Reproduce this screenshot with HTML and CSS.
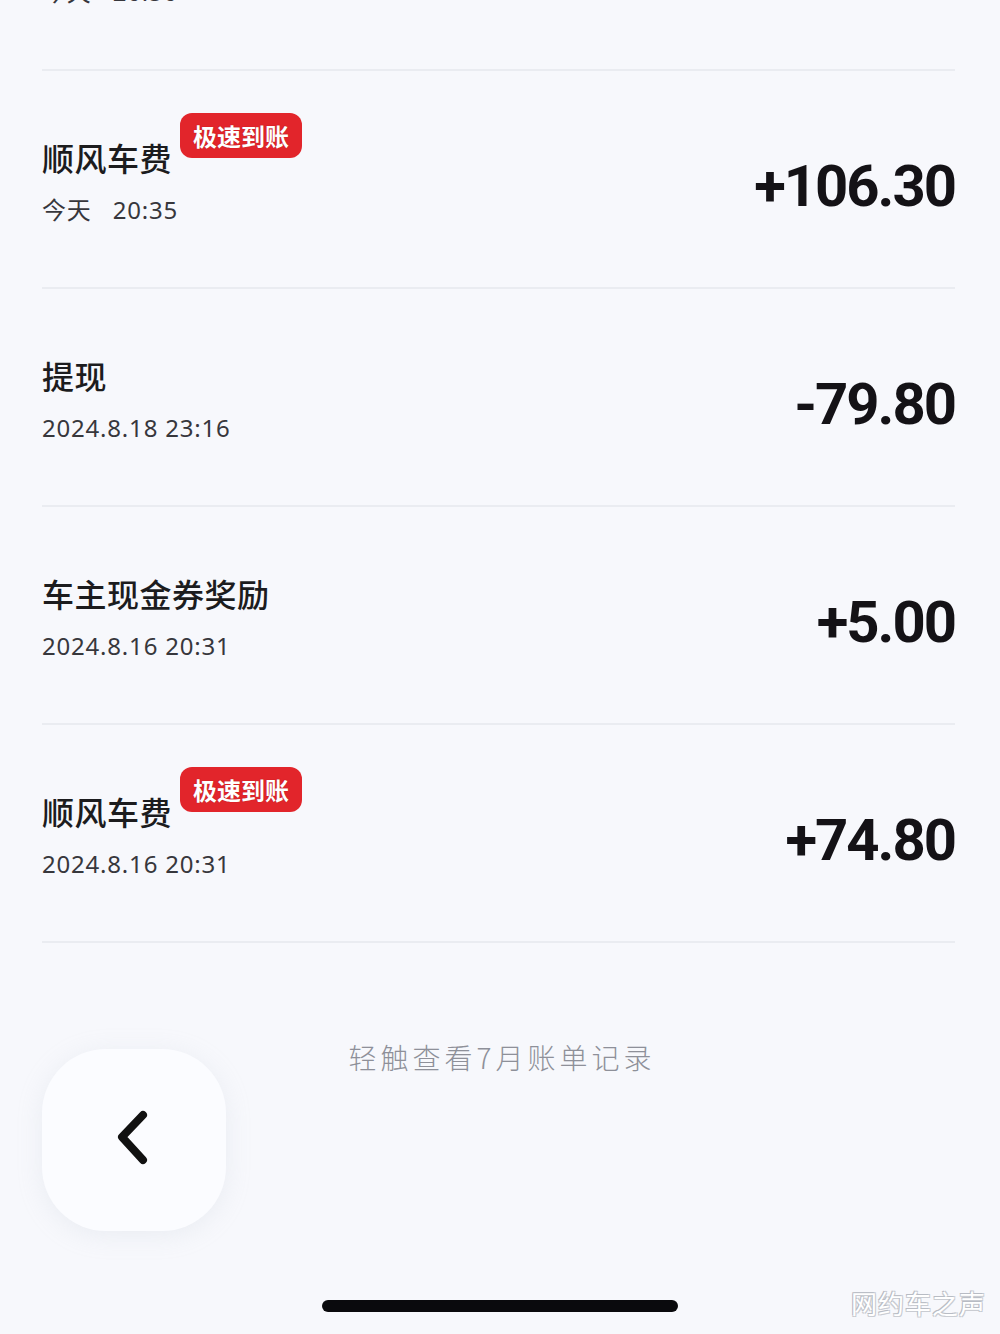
FILE: index.html
```html
<!DOCTYPE html>
<html lang="zh-CN">
<head>
<meta charset="utf-8">
<link rel="stylesheet" href="styles.css">
</head>
<body>
<div class="screen">
  <div class="list">
    <div class="row">
      <div class="info">
        <div class="title-line"><span class="title">顺风车费</span></div>
        <div class="date">今天&nbsp;&nbsp;&nbsp;20:50</div>
      </div>
      <div class="amount">+98.20</div>
    </div>
    <div class="row">
      <div class="info">
        <div class="title-line"><span class="title">顺风车费</span><span class="badge">极速到账</span></div>
        <div class="date">今天&nbsp;&nbsp;&nbsp;20:35</div>
      </div>
      <div class="amount">+106.30</div>
    </div>
    <div class="row">
      <div class="info">
        <div class="title-line"><span class="title">提现</span></div>
        <div class="date">2024.8.18 23:16</div>
      </div>
      <div class="amount">-79.80</div>
    </div>
    <div class="row">
      <div class="info">
        <div class="title-line"><span class="title">车主现金券奖励</span></div>
        <div class="date">2024.8.16 20:31</div>
      </div>
      <div class="amount">+5.00</div>
    </div>
    <div class="row">
      <div class="info">
        <div class="title-line"><span class="title">顺风车费</span><span class="badge">极速到账</span></div>
        <div class="date">2024.8.16 20:31</div>
      </div>
      <div class="amount">+74.80</div>
    </div>
  </div>
  <div class="more">轻触查看7月账单记录</div>
  <div class="back-wrap">
    <div class="back">
      <svg width="40" height="60" viewBox="0 0 40 60">
        <path d="M31 5 L10 27 L31 50" fill="none" stroke="#111" stroke-width="8" stroke-linecap="round" stroke-linejoin="round"/>
      </svg>
    </div>
  </div>
  <div class="home-bar"></div>
  <div class="watermark">网约车之声</div>
</div>
</body>
</html>
```
FILE: styles.css
```css
* { box-sizing: border-box; }
html, body {
  margin: 0;
  padding: 0;
  background: #f7f8fc;
}
body {
  width: 1000px;
  height: 1334px;
  overflow: hidden;
  font-family: "Noto Sans CJK SC", "Noto Sans", sans-serif;
}
.screen {
  position: relative;
  width: 1000px;
  height: 1334px;
  display: flex;
  flex-direction: column;
}
.list {
  margin-top: -147px;
  padding: 0 45px 0 42px;
}
.row {
  height: 218px;
  border-bottom: 2px solid #eaecf1;
  display: flex;
  align-items: center;
  justify-content: space-between;
}
.info {
  display: flex;
  flex-direction: column;
  padding-top: 2px;
}
.title-line {
  display: flex;
  align-items: center;
  height: 44px;
}
.title {
  font-size: 32px;
  font-weight: 500;
  color: #1c1c1e;
  letter-spacing: 0.5px;
}
.badge {
  position: relative;
  top: -22px;
  margin-left: 8px;
  height: 45px;
  padding: 0 13px;
  border-radius: 12px;
  background: #e2252b;
  color: #fff;
  font-size: 24px;
  font-weight: 700;
  line-height: 45px;
  text-shadow: 0 0 1px rgba(120,0,0,0.6);
}
.date {
  margin-top: 16px;
  font-family: "Noto Sans", "Noto Sans CJK SC", sans-serif;
  font-size: 24px;
  line-height: 30px;
  color: #37373c;
  letter-spacing: 0.8px;
}
.amount {
  padding-top: 14px;
  font-family: "Roboto", "Liberation Sans", sans-serif;
  font-weight: 700;
  font-size: 58px;
  letter-spacing: -2px;
  color: #141216;
}
.more {
  margin-top: 94px;
  text-align: center;
  font-size: 28px;
  font-weight: 300;
  letter-spacing: 4px;
  color: #8e9099;
  padding-left: 4px;
}
.back-wrap {
  padding-left: 42px;
  margin-top: -28px;
}
.back {
  width: 184px;
  height: 182px;
  border-radius: 64px;
  background: #fbfcff;
  box-shadow: 0 4px 26px rgba(180, 186, 200, 0.18);
  display: flex;
  align-items: center;
  justify-content: center;
  padding-right: 4px;
}
.home-bar {
  position: absolute;
  left: 322px;
  top: 1300px;
  width: 356px;
  height: 12px;
  border-radius: 6px;
  background: #0a0a0d;
}
.watermark {
  position: absolute;
  right: 14px;
  top: 1284px;
  font-size: 26px;
  color: #fff;
  letter-spacing: 1px;
  text-shadow: -1px -1px 0 #b8bcc4, 1px 1px 0 #c9ccd2, 1px -1px 0 #c9ccd2, -1px 1px 0 #c9ccd2;
}
```
